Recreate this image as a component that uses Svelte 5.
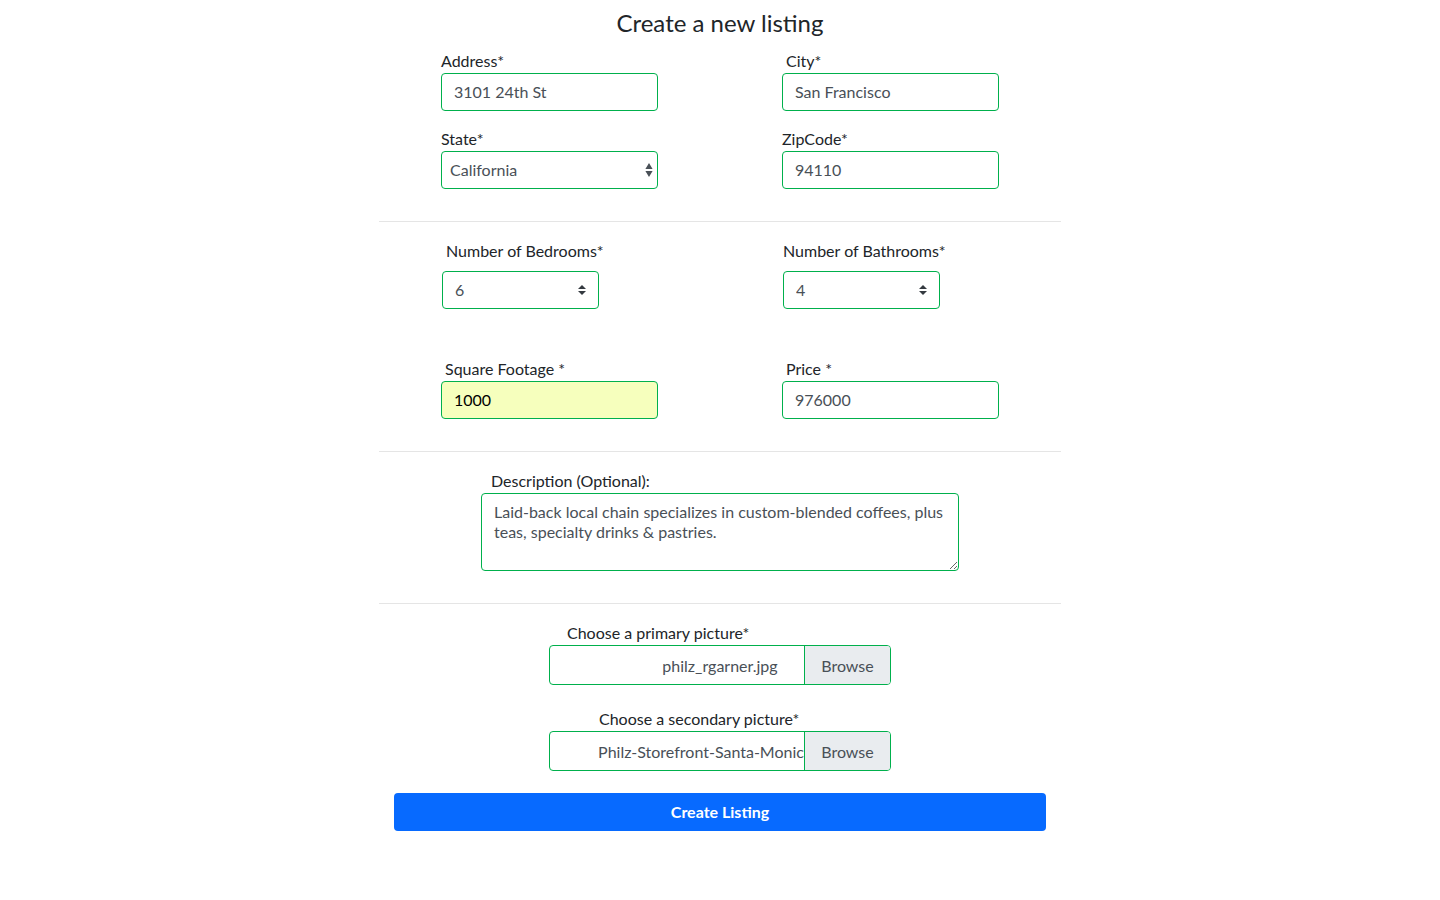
<script>
  let address = $state('3101 24th St');
  let city = $state('San Francisco');
  let region = $state('California');
  let zip = $state('94110');
  let bedrooms = $state('6');
  let bathrooms = $state('4');
  let footage = $state('1000');
  let price = $state('976000');
  let description = $state(
    'Laid-back local chain specializes in custom-blended coffees, plus teas, specialty drinks & pastries.'
  );
  let primary = $state('philz_rgarner.jpg');
  let secondary = $state('Philz-Storefront-Santa-Monica.png');

  const counts = ['1', '2', '3', '4', '5', '6', '7', '8'];
  const states = ['California', 'Nevada', 'Oregon', 'Washington'];
</script>

<main>
  <h1>Create a new listing</h1>
  <form onsubmit={(e) => e.preventDefault()}>
    <section class="grid">
      <div class="field">
        <label for="address">Address*</label>
        <input id="address" type="text" bind:value={address} />
      </div>
      <div class="field">
        <label class="indent" for="city">City*</label>
        <input id="city" type="text" bind:value={city} />
      </div>
      <div class="field">
        <label for="state">State*</label>
        <div class="native">
          <select id="state" bind:value={region}>
            {#each states as s}<option>{s}</option>{/each}
          </select>
          <svg viewBox="0 0 8 16" aria-hidden="true"><path d="M4 1L7.6 7H0.4zM4 15L7.6 9H0.4z" /></svg>
        </div>
      </div>
      <div class="field">
        <label for="zip">ZipCode*</label>
        <input id="zip" type="text" bind:value={zip} />
      </div>
    </section>

    <hr />

    <section class="grid rooms">
      <div class="field count">
        <label class="indent" for="bedrooms">Number of Bedrooms*</label>
        <div class="custom">
          <select id="bedrooms" bind:value={bedrooms}>
            {#each counts as n}<option>{n}</option>{/each}
          </select>
          <svg viewBox="0 0 4 5" aria-hidden="true"><path d="M2 0L0 2h4zm0 5L0 3h4z" /></svg>
        </div>
      </div>
      <div class="field count">
        <label for="bathrooms">Number of Bathrooms*</label>
        <div class="custom">
          <select id="bathrooms" bind:value={bathrooms}>
            {#each counts as n}<option>{n}</option>{/each}
          </select>
          <svg viewBox="0 0 4 5" aria-hidden="true"><path d="M2 0L0 2h4zm0 5L0 3h4z" /></svg>
        </div>
      </div>
      <div class="field">
        <label class="indent" for="footage">Square Footage *</label>
        <input id="footage" class="autofilled" type="text" bind:value={footage} />
      </div>
      <div class="field">
        <label class="indent" for="price">Price *</label>
        <input id="price" type="text" bind:value={price} />
      </div>
    </section>

    <hr />

    <section class="description">
      <label for="description">Description (Optional):</label>
      <textarea id="description" bind:value={description}></textarea>
    </section>

    <hr />

    <section class="pictures">
      <div class="picture">
        <label class="caption" for="primary">Choose a primary picture*</label>
        <div class="file">
          <input id="primary" type="file" onchange={(e) => (primary = e.currentTarget.files[0]?.name ?? primary)} />
          <div class="name"><span>{primary}</span></div>
          <span class="browse">Browse</span>
        </div>
      </div>
      <div class="picture">
        <label class="caption wide" for="secondary">Choose a secondary picture*</label>
        <div class="file">
          <input id="secondary" type="file" onchange={(e) => (secondary = e.currentTarget.files[0]?.name ?? secondary)} />
          <div class="name"><span>{secondary}</span></div>
          <span class="browse">Browse</span>
        </div>
      </div>
    </section>

    <button type="submit">Create Listing</button>
  </form>
</main>

<style>
  :global(body) {
    background: #fff;
    color: #212529;
    font-family: Lato, sans-serif;
    font-size: 16px;
    line-height: 24px;
  }

  main {
    box-sizing: border-box;
    max-width: 682px;
    margin: 0 auto;
    padding: 8px 0;
  }

  h1 {
    margin: 0 0 11px;
    font-size: 24px;
    font-weight: 400;
    line-height: 30px;
    text-align: center;
  }

  label {
    display: block;
  }

  .indent {
    padding-left: 4px;
  }

  input,
  select,
  textarea {
    box-sizing: border-box;
    display: block;
    width: 100%;
    height: 38px;
    margin: 0;
    padding: 0 12px;
    border: 1px solid #00b04c;
    border-radius: 4px;
    background: #fff;
    color: #495057;
    font: inherit;
  }

  input {
    padding-bottom: 2px;
  }

  select {
    appearance: none;
  }

  .grid {
    display: grid;
    grid-template-columns: 1fr 1fr;
    column-gap: 124px;
    row-gap: 16px;
    padding: 0 62px;
  }

  .rooms {
    row-gap: 48px;
  }

  .count {
    padding-left: 1px;
  }

  .count label {
    margin-bottom: 8px;
  }

  .native,
  .custom {
    position: relative;
  }

  .custom {
    max-width: 157px;
  }

  .native select {
    padding-left: 8px;
  }

  .native svg,
  .custom svg {
    position: absolute;
    top: 0;
    bottom: 0;
    margin: auto 0;
    pointer-events: none;
  }

  .native svg {
    right: 5px;
    width: 8px;
    height: 16px;
    fill: #495057;
  }

  .custom svg {
    right: 13px;
    width: 8px;
    height: 10px;
    fill: #343a40;
  }

  .autofilled {
    background: #f6ffbd;
    color: #000;
  }

  hr {
    height: 1px;
    margin: 32px 0 17px;
    border: 0;
    background: #e5e5e5;
  }

  .description {
    padding: 0 102px;
  }

  .description label {
    padding-left: 10px;
  }

  textarea {
    height: 78px;
    padding: 8px 12px;
    line-height: 20px;
    resize: vertical;
  }

  .pictures {
    display: grid;
    row-gap: 22px;
    padding: 0 170px;
  }

  .caption {
    padding-left: 18px;
  }

  .caption.wide {
    padding-left: 50px;
  }

  .file {
    position: relative;
    display: flex;
    box-sizing: border-box;
    height: 40px;
    overflow: hidden;
    border: 1px solid #00b04c;
    border-radius: 4px;
    color: #495057;
    line-height: 40px;
  }

  .file input {
    position: absolute;
    inset: 0;
    z-index: 1;
    height: 100%;
    opacity: 0;
  }

  .name {
    flex: 1;
    min-width: 0;
    overflow: hidden;
  }

  .name span {
    display: block;
    width: calc(100% + 86px);
    text-align: center;
    white-space: nowrap;
  }

  .browse {
    flex: none;
    box-sizing: border-box;
    width: 86px;
    border-left: 1px solid #00b04c;
    background: #e9ecef;
    text-align: center;
  }

  button {
    display: block;
    box-sizing: border-box;
    width: calc(100% - 30px);
    height: 38px;
    margin: 22px auto 0;
    padding: 0;
    border: 0;
    border-radius: 4px;
    background: #076aff;
    color: #fff;
    font: inherit;
    font-weight: 700;
  }
</style>
